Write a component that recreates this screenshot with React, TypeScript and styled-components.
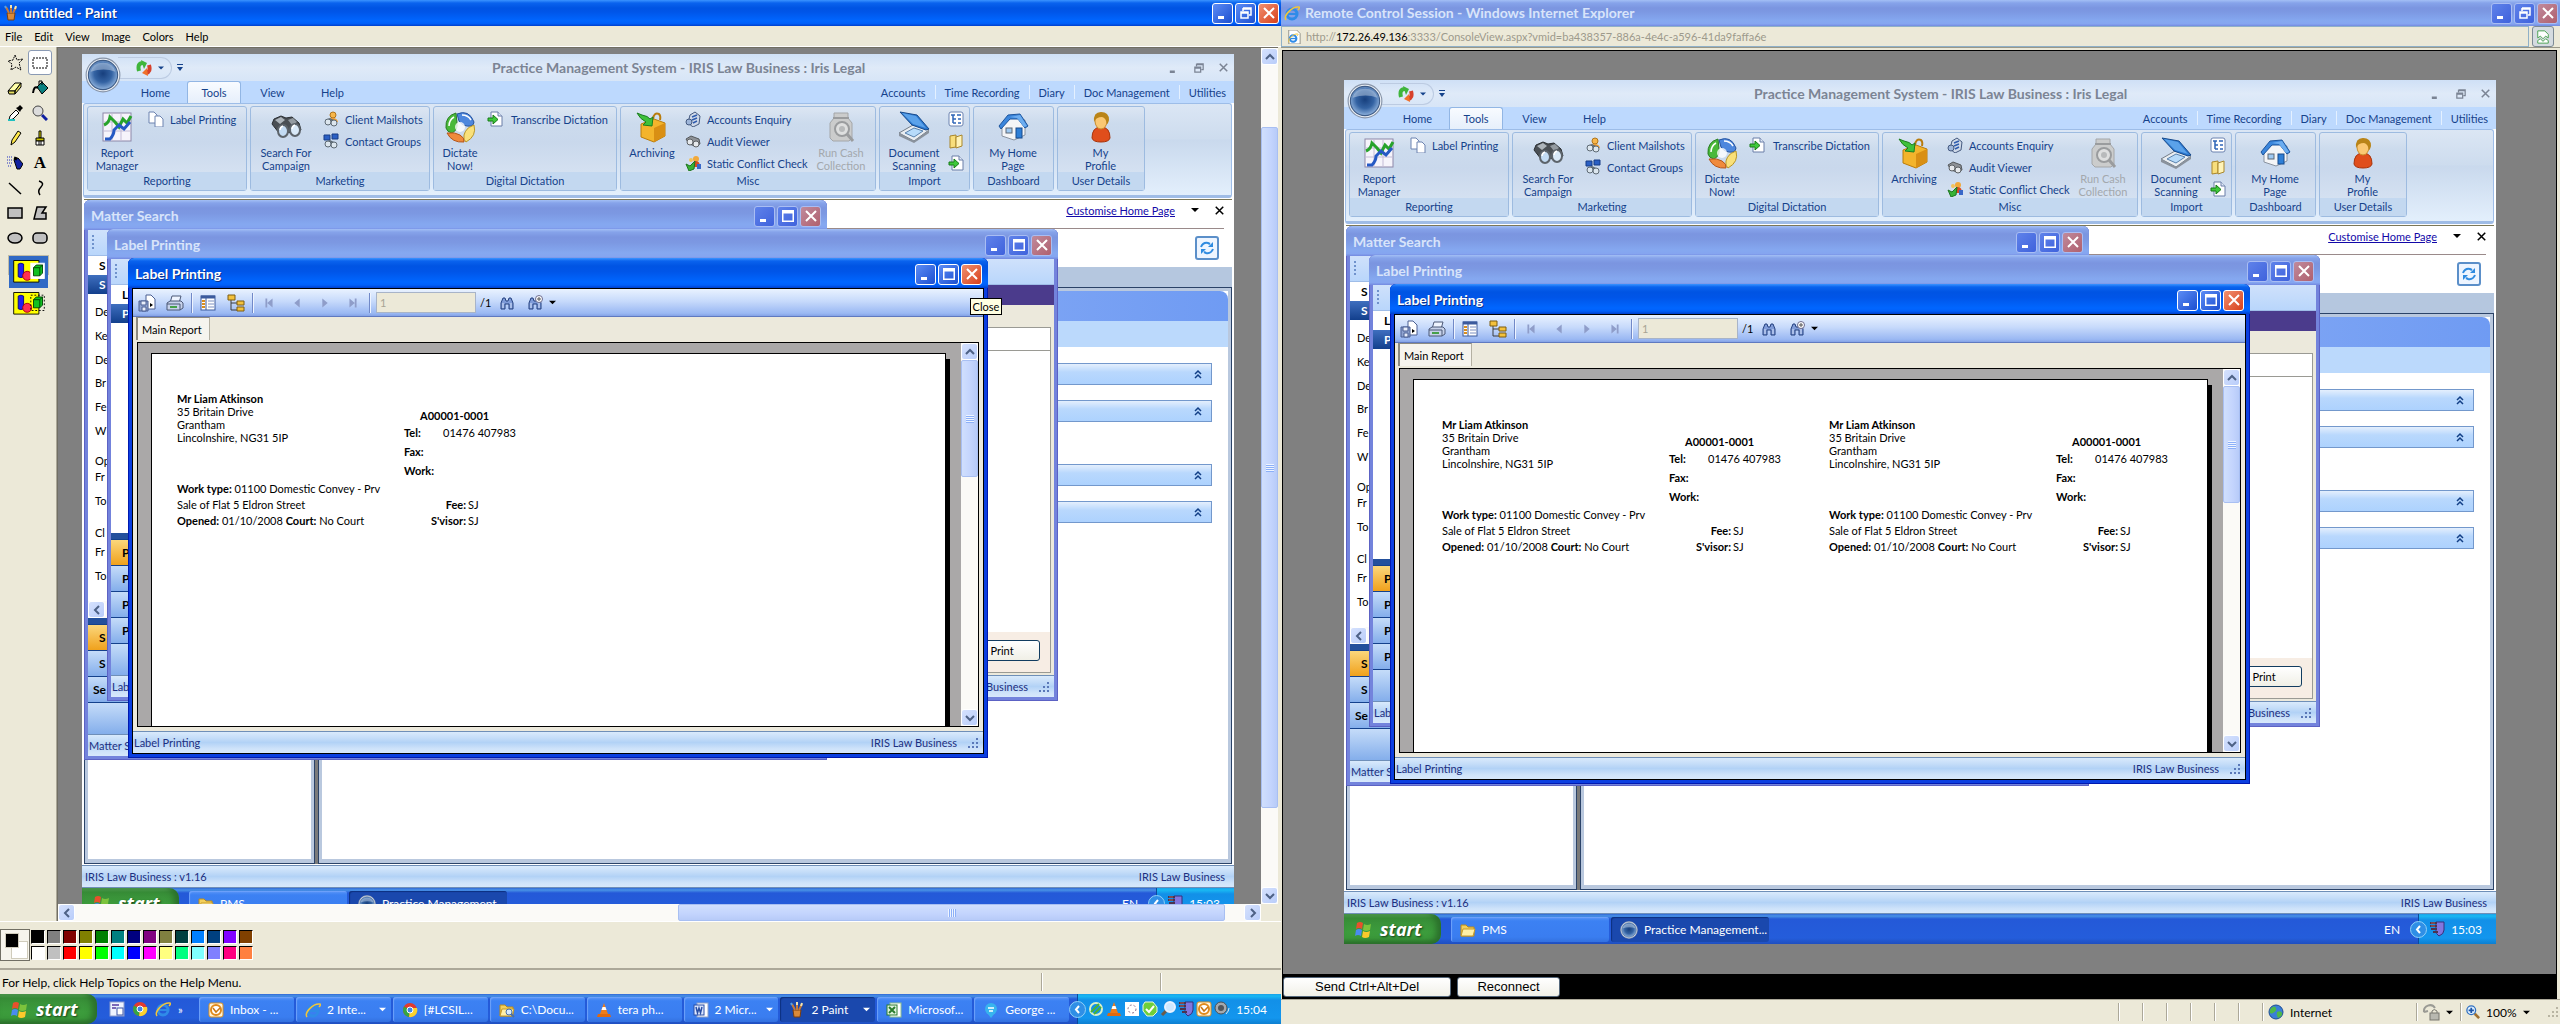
import React from "react";
import styled, { createGlobalStyle, css } from "styled-components";

const UI = `Lato, "DejaVu Sans Condensed", sans-serif`;

const Global = createGlobalStyle`
  * { box-sizing: border-box; }
  body { margin: 0; font: 11px/13px ${UI}; color: #000; background: #ece9d8; }
  button, input { font: inherit; color: inherit; margin: 0; }
  button { padding: 0; border: 0; background: none; }
  svg { display: block; flex: none; }
`;

/* ---------- icons ---------- */

type IconDef = { box: number; body: React.ReactNode };

const binoculars = (
  <g>
    <path d="M2 13l2-5 7-3 5 2 6-1 7 6 2 7-6 4-8-2-8 1z" fill="#4a4f54" stroke="#2b2f33" />
    <path d="M5 9l6-3 4 3-5 4z" fill="#aeb5bb" />
    <path d="M18 9l5-2 4 4-5 3z" fill="#949ba1" />
    <ellipse cx="13" cy="20" rx="5" ry="6" fill="#c3dbf3" stroke="#5d646b" strokeWidth="2" />
    <ellipse cx="25" cy="19" rx="5" ry="6" fill="#d9e9f8" stroke="#5d646b" strokeWidth="2" />
    <path d="M10 19q0-3 3-4M22 18q0-3 3-4" stroke="#fff" strokeWidth="1.500" fill="none" />
  </g>
);

const pageArrow = (
  <g>
    <path d="M4 1h7l4 4v10H4z" fill="#fff" stroke="#6b7fa8" />
    <path d="M11 1v4h4" fill="#dfe8f6" stroke="#6b7fa8" />
    <path d="M1 7h5V4l5 4.500-5 4.500v-3H1z" fill="#3fc93a" stroke="#167a18" />
  </g>
);

const finder = (
  <g>
    <path d="M2 14V8l2-5h2l1 3h2l1-3h2l2 5v6h-4V9H6v5z" fill="#7f9bd8" stroke="#24407f" />
    <path d="M4 8v5M12 8v5" stroke="#d7e2fa" />
  </g>
);

const cone = (
  <g>
    <path d="M8 1l4 11H4z" fill="#ef7d1a" />
    <path d="M6.500 5h3l1 3h-5z" fill="#fff" />
    <path d="M2 12h12l1 3H1z" fill="#e06a10" />
  </g>
);

const ieMark = (
  <g>
    <circle cx="8" cy="9" r="5" fill="none" stroke="#2f8be8" strokeWidth="3" />
    <path d="M4 9h9" stroke="#2f8be8" strokeWidth="2" />
    <path d="M2 15C-1 11 8 1 15 2c1 1 0 2-1 3" fill="none" stroke="#f2c53a" strokeWidth="1.500" />
  </g>
);

const folder = (
  <g>
    <path d="M1 3h5l2 2h6v9H1z" fill="#f3cf5b" stroke="#b88a1c" />
    <path d="M3 7h12l-2 7H1z" fill="#fff0a8" stroke="#c79a28" />
  </g>
);

const chromeMark = (
  <g>
    <circle cx="8" cy="8" r="7" fill="#e23b2e" />
    <path d="M8 8L2 4.500A7 7 0 0 0 7 15z" fill="#35a544" />
    <path d="M8 8l-1 7a7 7 0 0 0 8-9H9z" fill="#fbd22f" />
    <circle cx="8" cy="8" r="3" fill="#3f86e8" stroke="#fff" />
  </g>
);

const shield = (
  <g>
    <path d="M7 1h8v8q0 4-5 6-3-2-3-5z" fill="#8276de" stroke="#35307a" />
    <path d="M1 2h7M1 5h7M2 8h6M4 11h5" stroke="#4a3450" strokeWidth="2" />
    <path d="M2 2h4M2 5h4" stroke="#b06058" />
  </g>
);

const brushes = (
  <g>
    <path d="M4 8h8l-1 7H5z" fill="#d98a3a" stroke="#7a3e10" />
    <path d="M6 8L3 2M8 8V1M10 8l3-6" stroke="#c47a3c" strokeWidth="2" />
    <path d="M3 3L2 1" stroke="#58a0e0" strokeWidth="2" />
    <path d="M8 3V0M12 4l1-3" stroke="#f1e4b0" strokeWidth="2" />
  </g>
);

const outlook = (
  <g>
    <rect x="1" y="1" width="14" height="14" rx="2" fill="#fff3d6" stroke="#d98e1f" />
    <circle cx="8" cy="8" r="5" fill="#fff" stroke="#e08a1c" strokeWidth="2" />
    <path d="M5 6l3 4 4-4" fill="none" stroke="#c97612" strokeWidth="1.500" />
  </g>
);

const contactPair = (
  <g>
    <path d="M2 9l5-2 6 3-2 3z" fill="#5e6a74" />
    <circle cx="5" cy="11" r="3" fill="#dce6ee" stroke="#5e6a74" />
    <circle cx="11" cy="12" r="3" fill="#dce6ee" stroke="#5e6a74" />
  </g>
);

const tiles = (dashed: boolean) => (
  <g>
    <path d="M3 5h28v24H3z" fill="#ff0" stroke="#000" />
    <path d="M8 9q3-2 6 0v14q-3 2-6 0z" fill="#2020f0" stroke="#000080" />
    <circle cx="18" cy="22" r="5" fill="#ff3050" stroke="#a00" />
    <rect
      x="22"
      y="8"
      width="15"
      height="17"
      fill={dashed ? "none" : "#fff"}
      stroke={dashed ? "#000" : "#fff"}
      strokeDasharray={dashed ? "2 2" : undefined}
    />
    <path d="M25 13l3-3h7v9l-3 3h-7z" fill="#10c020" stroke="#004000" />
    <path d="M25 13h7v9M32 13l3-3" fill="none" stroke="#004000" />
  </g>
);

const ICONS: Record<string, IconDef> = {
  chart: {
    box: 32,
    body: (
      <g>
        <rect x="2" y="2" width="28" height="28" fill="#f6f4fb" stroke="#8d87a8" />
        <path d="M2 11h28M2 20h28M11 2v28M20 2v28" stroke="#c3bcd6" />
        <path d="M3 14q5-2 6-8l5 5 4 5 4-8 4 4 4-7" fill="none" stroke="#27a32b" strokeWidth="3" />
        <path d="M4 28h5q4-4 4-9l5-5 5 4 6-7" fill="none" stroke="#2559c4" strokeWidth="3" />
      </g>
    ),
  },
  binoculars: { box: 32, body: binoculars },
  swirl: {
    box: 32,
    body: (
      <g>
        <path d="M12 2q-11 3-10 15 1 4 6 5 6-3 5-10z" fill="#49b83a" stroke="#2b7e24" />
        <path d="M13 3q12-5 17 8 0 3-3 4-8 1-12-5z" fill="#4d87dd" stroke="#27549f" />
        <path d="M30 14q3 11-8 17-3-2-2-7 2-7 8-9z" fill="#f9e07a" stroke="#b99526" />
        <path d="M3 22q5 10 17 9 1-4-4-7-6-3-10-2z" fill="#f08a3c" stroke="#b4561b" />
        <circle cx="16" cy="16" r="5" fill="#fff" fillOpacity=".8" />
        <path d="M5 15q0-6 5-9M18 4q6 0 9 5" fill="none" stroke="#fff" strokeWidth="1.500" />
      </g>
    ),
  },
  archive: {
    box: 32,
    body: (
      <g>
        <path d="M5 13l13-5 11 4v13l-11 6-13-5z" fill="#f3b42c" stroke="#b97c0d" />
        <path d="M18 17l11-5v13l-11 6z" fill="#d98f14" />
        <path d="M17 8q1-7 6-5 2 2 1 6" fill="none" stroke="#b97c0d" strokeWidth="2" />
        <path d="M1 2l5 2q6 1 8 4l3-2-1 9-9-1 3-3Q4 8 1 2z" fill="#3fc13a" stroke="#1d7d20" />
      </g>
    ),
  },
  jar: {
    box: 32,
    body: (
      <g>
        <path d="M9 2h14v5l4 5v15l-3 3H8l-3-3V12l4-5z" fill="#cbcccc" stroke="#a4a6a8" />
        <path d="M8 7h16" stroke="#9a9c9e" strokeWidth="2" />
        <circle cx="17" cy="18" r="7" fill="#dedfdf" stroke="#9a9c9e" strokeWidth="2" />
        <circle cx="17" cy="18" r="3" fill="#b8babb" />
        <path d="M22 23l6 7" stroke="#9a9c9e" strokeWidth="3" />
      </g>
    ),
  },
  scanner: {
    box: 32,
    body: (
      <g>
        <path d="M1 22l14-8 16 5-15 11z" fill="#e9edf1" stroke="#747d88" />
        <path d="M7 22l9-5 9 3-9 6z" fill="#b7dbfa" stroke="#5a82ad" />
        <path d="M2 1l17 3 12 14-3 1-14-5z" fill="#2b78cf" stroke="#174a8c" />
        <path d="M4 2l14 3 10 12-13-4z" fill="#5ba2ea" />
        <path d="M1 22v3l15 7 15-10v-3L16 30z" fill="#8a929c" />
      </g>
    ),
  },
  house: {
    box: 32,
    body: (
      <g>
        <path d="M5 15l9-9 14 3v15l-11 5-12-4z" fill="#f4f5f7" stroke="#8a93a0" />
        <path d="M2 15L11 4l12-1 8 12-3 2-7-9-8 0-9 10z" fill="#3b86dc" stroke="#1c549c" />
        <path d="M13 6l10-2 7 11-3 1-7-9z" fill="#6cadf0" />
        <rect x="19" y="17" width="6" height="10" fill="#2f7fd6" stroke="#174a8c" />
        <rect x="9" y="17" width="6" height="5" fill="#9ec9f2" stroke="#5c6672" />
      </g>
    ),
  },
  person: {
    box: 32,
    body: (
      <g>
        <path d="M7 27q0-11 9-11t9 11q-1 4-9 4t-9-4z" fill="#e04e1c" stroke="#a83208" />
        <ellipse cx="16" cy="10" rx="6" ry="8" fill="#fbc873" stroke="#c98d2c" />
        <path d="M9 11Q8 1 16 1t8 8q-1 4-2 4-1-6-5-7-6 0-8 5z" fill="#b98418" />
      </g>
    ),
  },
  pages: {
    box: 16,
    body: (
      <g fill="#fff" stroke="#6d83b0">
        <path d="M1 1h5l3 3v8H1z" />
        <path d="M7 5h5l3 3v8H7z" />
      </g>
    ),
  },
  client: {
    box: 16,
    body: (
      <g>
        <circle cx="10" cy="4" r="3" fill="#f7b64a" stroke="#b0741a" />
        <path d="M5 11q1-4 5-4t5 4z" fill="#f09b2a" />
        {contactPair}
      </g>
    ),
  },
  contact: {
    box: 16,
    body: (
      <g>
        <path d="M1 2h6v5H1zM9 1h6v5H9z" fill="#2a5fc4" stroke="#173c86" />
        {contactPair}
      </g>
    ),
  },
  pageArrow: { box: 16, body: pageArrow },
  enquiry: {
    box: 16,
    body: (
      <g>
        <path d="M5 4l5-3 5 4-1 8-6 3-5-4z" fill="#cfd9e8" stroke="#44597f" />
        <path d="M7 6l5-2M7 9l5-2M8 12l4-2" stroke="#2f5cae" strokeWidth="1.500" />
        <circle cx="4" cy="11" r="3" fill="#9eb6da" stroke="#44597f" />
      </g>
    ),
  },
  audit: {
    box: 16,
    body: (
      <g>
        <path d="M1 6l5-3 8 3 1 5-5 2-6-2z" fill="#8e9297" stroke="#55595d" />
        <circle cx="5" cy="9" r="3" fill="#e6e9ec" stroke="#5d6165" />
        <circle cx="11" cy="11" r="3" fill="#e6e9ec" stroke="#5d6165" />
      </g>
    ),
  },
  conflict: {
    box: 16,
    body: (
      <g>
        <circle cx="6" cy="5" r="2" fill="#f2c35b" />
        <circle cx="11" cy="4" r="3" fill="#f2a93b" />
        <path d="M7 12q0-6 4-6t4 6z" fill="#d94a22" />
        <rect x="12" y="9" width="4" height="5" fill="#3a68c8" />
        <path d="M1 9l4 2 5-5-1 8-5 2z" fill="#39b235" stroke="#1c7620" />
      </g>
    ),
  },
  list: {
    box: 16,
    body: (
      <g>
        <rect x="1" y="1" width="14" height="14" rx="2" fill="#fff" stroke="#6d83b0" />
        <path d="M3 4h4M5 4v8M5 8h3M5 12h3M9 4h4M10 8h3M10 12h3" stroke="#2f66b8" fill="none" strokeWidth="1.500" />
      </g>
    ),
  },
  foldout: {
    box: 16,
    body: (
      <g>
        <path d="M2 3l6-1v12l-6 1z" fill="#f8de7c" stroke="#a9862a" />
        <path d="M8 4l6-2v11l-6 2z" fill="#fff3b8" stroke="#a9862a" />
      </g>
    ),
  },
  recycle: {
    box: 16,
    body: (
      <g fill="none" strokeWidth="4">
        <path d="M3 11Q1 3 7 3" stroke="#3fb53b" />
        <path d="M5 0l6 3-3 6z" fill="#3fb53b" stroke="none" />
        <path d="M13 5q2 7-3 8" stroke="#d7402a" />
        <path d="M11 8l-5 5 6 3z" fill="#f0702a" stroke="none" />
      </g>
    ),
  },
  refresh: {
    box: 16,
    body: (
      <g fill="none" stroke="#2f8be0" strokeWidth="2">
        <path d="M2 7q2-5 7-4l2 1" />
        <path d="M14 2v5H9z" fill="#2f8be0" stroke="none" />
        <path d="M14 9q-2 5-7 4l-2-1" />
        <path d="M2 14V9h5z" fill="#2f8be0" stroke="none" />
      </g>
    ),
  },
  orb: {
    box: 32,
    body: (
      <g>
        <defs>
          <radialGradient id="orbFill" cx="50%" cy="45%" r="60%">
            <stop offset="0" stopColor="#173f7d" />
            <stop offset=".5" stopColor="#3463a3" />
            <stop offset="1" stopColor="#a3c4ea" />
          </radialGradient>
        </defs>
        <circle cx="16" cy="16" r="15" fill="#eef2f7" stroke="#8794a8" />
        <circle cx="16" cy="16" r="13" fill="url(#orbFill)" stroke="#3d5c88" />
        <path d="M5 13Q7 5 16 5t11 8q-10-4-22 0z" fill="#cfdcec" fillOpacity=".45" />
      </g>
    ),
  },
  exportFile: {
    box: 18,
    body: (
      <g stroke="#4a5f92">
        <path d="M8 1h5l4 4v10H8z" fill="#fff" />
        <path d="M1 7h9v10H1z" fill="#8fa3d0" />
        <path d="M3 7h5v4H3zM4 13h4v4H4z" fill="#e8eefb" />
        <path d="M12 9l3 2-3 2z" fill="#000" stroke="none" />
      </g>
    ),
  },
  printer: {
    box: 18,
    body: (
      <g stroke="#4b5877">
        <path d="M6 2h9l-2 7H4z" fill="#eef4ff" />
        <path d="M1 9l3-2h11l2 2v5l-3 2H1z" fill="#c7d2ea" />
        <path d="M1 10h13v6" fill="none" />
        <path d="M4 13h7" stroke="#46a04a" strokeWidth="2" />
      </g>
    ),
  },
  panel: {
    box: 18,
    body: (
      <g>
        <rect x="2" y="2" width="14" height="14" fill="#fff" stroke="#3b5a9d" />
        <path d="M2 3h14" stroke="#3b5a9d" strokeWidth="3" />
        <path d="M3 7h3M3 10h3M3 13h3" stroke="#d98e1f" strokeWidth="2" />
        <path d="M9 7h6M9 10h6M9 13h6" stroke="#7a8fc0" />
        <path d="M7 4v12" stroke="#3b5a9d" />
      </g>
    ),
  },
  tree: {
    box: 18,
    body: (
      <g>
        <path d="M4 6v10h7M4 9h7" fill="none" stroke="#3c3c3c" />
        <path d="M1 1h7v5H1zM10 7h7v4h-7zM10 13h7v4h-7z" fill="#f3c13c" stroke="#7d5d10" />
      </g>
    ),
  },
  first: { box: 18, body: <path d="M5 4h2v10H5zM13 4v10L7 9z" fill="#8f9dc9" /> },
  prev: { box: 18, body: <path d="M12 4v10L6 9z" fill="#8f9dc9" /> },
  next: { box: 18, body: <path d="M6 4v10l6-5z" fill="#8f9dc9" /> },
  last: { box: 18, body: <path d="M5 4v10l6-5zM11 4h2v10h-2z" fill="#8f9dc9" /> },
  find: { box: 16, body: finder },
  findPlus: {
    box: 16,
    body: (
      <g>
        {finder}
        <circle cx="12" cy="4" r="3.500" fill="#fff" stroke="#6b6b8c" />
        <path d="M10 4h4M12 2v4" stroke="#555" />
      </g>
    ),
  },
  flag: {
    box: 20,
    body: (
      <g>
        <path d="M3 4q3-2 6 0L8 10q-3-2-6 0z" fill="#e8502c" />
        <path d="M10 5q3 2 7 0l-1 6q-4 2-7 0z" fill="#7cc33c" />
        <path d="M2 11q3-2 6 0l-1 6q-3-2-6 0z" fill="#4a8bf0" />
        <path d="M9 12q3 2 7 0l-1 6q-4 2-7 0z" fill="#fbc92c" />
      </g>
    ),
  },
  brushes: { box: 16, body: brushes },
  ie: { box: 16, body: ieMark },
  iePage: {
    box: 16,
    body: (
      <g>
        <path d="M2 0h9l4 4v12H2z" fill="#fff" stroke="#8a8a80" />
        <g transform="translate(1 3) scale(.75)">{ieMark}</g>
      </g>
    ),
  },
  compat: {
    box: 16,
    body: (
      <g fill="#fff" stroke="#3c9a42">
        <path d="M2 1h8l4 4v4l-3-2-3 3-3-3-3 2z" />
        <path d="M2 15v-3l3-2 3 3 3-3 3 2v3z" />
      </g>
    ),
  },
  desktop: {
    box: 16,
    body: (
      <g>
        <rect x="1" y="1" width="14" height="14" fill="#eef3ff" stroke="#8c9ccc" />
        <path d="M3 4h7M3 7h4" stroke="#7a68b8" strokeWidth="2" />
        <rect x="8" y="7" width="6" height="7" fill="#fff" stroke="#3d57a8" />
      </g>
    ),
  },
  chrome: { box: 16, body: chromeMark },
  outlook: { box: 16, body: outlook },
  folder: { box: 16, body: folder },
  folderFind: {
    box: 16,
    body: (
      <g>
        {folder}
        <circle cx="10" cy="10" r="3" fill="#d6ecff" stroke="#4a6fa8" />
        <path d="M12 12l3 3" stroke="#4a6fa8" strokeWidth="2" />
      </g>
    ),
  },
  cone: { box: 16, body: cone },
  word: {
    box: 16,
    body: (
      <g>
        <rect x="4" y="1" width="11" height="14" fill="#fff" stroke="#8ea0c8" />
        <rect x="1" y="3" width="10" height="10" fill="#dce7ff" stroke="#2a4fa5" />
        <path d="M3 5l1.500 6L6 6l1.500 5L9 5" fill="none" stroke="#2a4fa5" strokeWidth="1.500" />
      </g>
    ),
  },
  excel: {
    box: 16,
    body: (
      <g>
        <rect x="4" y="1" width="11" height="14" fill="#fff" stroke="#8fc08f" />
        <rect x="1" y="3" width="10" height="10" fill="#e2f4e0" stroke="#2b7d2e" />
        <path d="M3 5l6 6M9 5l-6 6" stroke="#2b7d2e" strokeWidth="2" />
      </g>
    ),
  },
  talk: {
    box: 16,
    body: (
      <g>
        <circle cx="8" cy="7" r="6" fill="#38b4ee" />
        <path d="M5 12h6l-3 4z" fill="#38b4ee" />
        <path d="M5 6h6M6 9h4" stroke="#fff" strokeWidth="1.500" />
      </g>
    ),
  },
  orbGreen: {
    box: 16,
    body: (
      <g fill="none">
        <circle cx="8" cy="8" r="6" stroke="#d9f0c8" strokeWidth="2" />
        <path d="M3 11L11 3M6 13l7-7" stroke="#49b235" strokeWidth="2" />
      </g>
    ),
  },
  spinner: {
    box: 16,
    body: (
      <g>
        <rect x="1" y="1" width="14" height="14" fill="#fff" />
        <circle cx="8" cy="8" r="4" fill="none" stroke="#8b6f8b" strokeDasharray="2 2" />
      </g>
    ),
  },
  tick: {
    box: 16,
    body: (
      <g>
        <path d="M3 1h8l4 5v5l-4 4H5l-4-5V4z" fill="#6fcf3a" stroke="#e9f7df" />
        <path d="M4 8l3 3 5-6" fill="none" stroke="#fff" strokeWidth="2" />
      </g>
    ),
  },
  lens: {
    box: 16,
    body: (
      <g>
        <path d="M2 14l5-5" stroke="#6d5a48" strokeWidth="3" />
        <circle cx="10" cy="6" r="5" fill="#cfe8ff" stroke="#e9f2ff" strokeWidth="2" />
      </g>
    ),
  },
  shield: { box: 16, body: shield },
  speaker: {
    box: 16,
    body: (
      <g>
        <circle cx="7" cy="7" r="6" fill="#a4a9ae" stroke="#4b5054" />
        <circle cx="7" cy="7" r="3" fill="#4f545a" />
        <path d="M12 13q3-3 3-6" fill="none" stroke="#e0e6ec" />
      </g>
    ),
  },
  globe: {
    box: 16,
    body: (
      <g>
        <circle cx="8" cy="8" r="7" fill="#3a7fd8" stroke="#1d4c94" />
        <path d="M3 4q4-3 5 0t-3 5-3-3zM9 8q4-2 5 1t-4 5q-2-3-1-6z" fill="#4eb84a" />
      </g>
    ),
  },
  lock: {
    box: 18,
    body: (
      <g>
        <path d="M2 9a6 6 0 0 1 11-4M2 9l4-1" fill="none" stroke="#9a9a94" strokeWidth="2" />
        <rect x="8" y="10" width="9" height="7" fill="#b8b8b0" stroke="#77776f" />
        <path d="M10 10V8q2-3 5 0v2" fill="none" stroke="#77776f" />
      </g>
    ),
  },
  zoomIn: {
    box: 16,
    body: (
      <g>
        <path d="M10 10l5 5" stroke="#a07030" strokeWidth="3" />
        <circle cx="6" cy="6" r="5" fill="#dff0ff" stroke="#2f6fc0" strokeWidth="1.500" />
        <path d="M3 6h6M6 3v6" stroke="#1d55a8" strokeWidth="2" />
      </g>
    ),
  },
  freeSelect: {
    box: 16,
    body: <path d="M8 0l2 5 6-1-4 4 2 7-5-3-5 3 1-6-4-3 5-1z" fill="none" stroke="#000" strokeDasharray="2 1" />,
  },
  rectSelect: {
    box: 16,
    body: <rect x="1" y="3" width="14" height="10" fill="none" stroke="#000" strokeDasharray="2 1" />,
  },
  eraser: {
    box: 16,
    body: (
      <g stroke="#000">
        <path d="M1 11l7-8h6l-6 8z" fill="#ffffa8" />
        <path d="M1 11h7v3H2zM8 11l6-8v4l-6 7z" fill="#e8e060" />
      </g>
    ),
  },
  fill: {
    box: 16,
    body: (
      <g stroke="#000">
        <path d="M5 7l5-5 6 6-6 6z" fill="#0a8080" />
        <path d="M6 8q-4-3-5 5" fill="none" strokeWidth="2" />
        <path d="M7 5V1h3v4" fill="none" />
      </g>
    ),
  },
  dropper: {
    box: 16,
    body: (
      <g>
        <path d="M2 15l1-4 6-6 3 3-6 6z" fill="#fff" stroke="#000" />
        <path d="M9 3l2-1 2-2 3 3-2 2-1 2z" fill="#000" />
        <path d="M1 15h7" stroke="#20c0c0" strokeWidth="2" />
      </g>
    ),
  },
  magnifier: {
    box: 16,
    body: (
      <g>
        <circle cx="6" cy="6" r="5" fill="#dcdcdc" stroke="#444" />
        <path d="M10 10l5 5" stroke="#1020a0" strokeWidth="3" />
      </g>
    ),
  },
  pencil: {
    box: 16,
    body: <path d="M4 15l1-5 6-9 3 2-6 9z" fill="#ffe84a" stroke="#000" />,
  },
  brush: {
    box: 16,
    body: (
      <g stroke="#000">
        <path d="M7 1h2v7H7z" fill="#e8e000" />
        <path d="M4 8h8v3H4z" fill="#c8c000" />
        <path d="M4 11h8v4H4z" fill="#fff" />
        <path d="M7 11v4M9 11v4" />
      </g>
    ),
  },
  spray: {
    box: 16,
    body: (
      <g>
        <path d="M7 5l4-2 5 6-3 5-3 0z" fill="#1020a0" stroke="#000" />
        <path d="M7 3l3 1" stroke="#000" strokeWidth="3" />
        <path d="M0 2h6M0 5h6M0 8h5M1 11h3" stroke="#2030c0" strokeDasharray="1 1" />
      </g>
    ),
  },
  line: { box: 16, body: <path d="M2 3l12 11" stroke="#000" strokeWidth="1.500" /> },
  curve: { box: 16, body: <path d="M7 1q6 2 2 6t-1 8" fill="none" stroke="#000" strokeWidth="1.500" /> },
  rect: { box: 16, body: <rect x="1" y="3" width="14" height="10" fill="#c0c0c0" stroke="#000" strokeWidth="1.500" /> },
  poly: { box: 16, body: <path d="M5 2h9l-4 6h4v6H2z" fill="#c0c0c0" stroke="#000" strokeWidth="1.500" /> },
  ellipse: { box: 16, body: <ellipse cx="8" cy="8" rx="7" ry="5" fill="#c0c0c0" stroke="#000" strokeWidth="1.500" /> },
  roundRect: {
    box: 16,
    body: <rect x="1" y="3" width="14" height="10" rx="4" fill="#c0c0c0" stroke="#000" strokeWidth="1.500" />,
  },
  tilesOpaque: { box: 40, body: tiles(false) },
  tilesClear: { box: 40, body: tiles(true) },
  chevronUp: { box: 10, body: <path d="M1 7l4-4 4 4" fill="none" stroke="#4d6185" strokeWidth="2" /> },
  chevronDown: { box: 10, body: <path d="M1 3l4 4 4-4" fill="none" stroke="#4d6185" strokeWidth="2" /> },
  chevronLeft: { box: 10, body: <path d="M7 1L3 5l4 4" fill="none" stroke="#4d6185" strokeWidth="2" /> },
  chevronRight: { box: 10, body: <path d="M3 1l4 4-4 4" fill="none" stroke="#4d6185" strokeWidth="2" /> },
  expander: {
    box: 10,
    body: <path d="M2 5l3-3 3 3M2 9l3-3 3 3" fill="none" stroke="#123f86" strokeWidth="1.500" />,
  },
  minimize: { box: 12, body: <path d="M1 9h6v3H1z" fill="currentColor" /> },
  maximize: {
    box: 12,
    body: <path d="M0 0h12v12H0zM1.500 3.500v7h9v-7z" fill="currentColor" fillRule="evenodd" />,
  },
  restore: {
    box: 12,
    body: (
      <path d="M3 1h8v7H9M3 1v3M3 2h8M1 5h7v6H1zM1 6h7" fill="none" stroke="currentColor" strokeWidth="1.500" />
    ),
  },
  cross: { box: 12, body: <path d="M1 1l10 10M11 1L1 11" stroke="currentColor" strokeWidth="2" /> },
  caret: { box: 8, body: <path d="M0 2h8L4 6z" fill="currentColor" /> },
  overflow: { box: 8, body: <path d="M1 0h6v1H1zM1 3h6L4 7z" fill="currentColor" /> },
};

const Icon = ({ name, size }: { name: string; size?: number }) => {
  const d = ICONS[name];
  const s = size ?? d.box;
  return (
    <svg width={s} height={s} viewBox={`0 0 ${d.box} ${d.box}`} aria-hidden="true">
      {d.body}
    </svg>
  );
};

/* ---------- window chrome ---------- */

const activeBar = "linear-gradient(#3b94ff 0, #0a63ee 3px, #0054e3 8px, #0055e8 45%, #0066ff 80%, #0060fa 90%, #0040cc)";
const dimBar = "linear-gradient(#a3bff5 0, #86a3ea 3px, #7b95e0 8px, #7c98e2 45%, #85a8f0 80%, #85a5f0 92%, #7389e0)";
const statusBlue = "linear-gradient(#d9eafc, #c3dcf8 30%, #b2d2f6 50%, #cfe3fa 80%, #d7e8fc)";

const TitleBar = styled.header<{ $dim?: boolean; $inner?: boolean }>`
  display: flex;
  align-items: center;
  gap: 5px;
  flex: none;
  height: ${(p) => (p.$inner ? 30 : 26)}px;
  padding: ${(p) => (p.$inner ? "2px 6px 0 7px" : "0 2px 0 3px")};
  background: ${(p) => (p.$dim ? dimBar : activeBar)};
  color: ${(p) => (p.$dim ? "#d8e4fa" : "#fff")};
  text-shadow: ${(p) => (p.$dim ? "none" : "1px 1px #0a318c")};
  font-size: 14px;
  line-height: 18px;
  font-weight: 700;
  border-radius: ${(p) => (p.$inner ? "6px 6px 0 0" : "0")};
  white-space: nowrap;
`;

const TitleText = styled.span`
  flex: 1;
`;

const Caption = styled.button<{ $dim?: boolean; $close?: boolean }>`
  display: grid;
  place-items: center;
  width: 21px;
  height: 21px;
  border: 1px solid ${(p) => (p.$dim ? "#a9bdf3" : "#fff")};
  border-radius: 3px;
  color: #fff;
  background: ${(p) =>
    p.$close
      ? p.$dim
        ? "linear-gradient(135deg, #c08a9c, #b0606e)"
        : "linear-gradient(135deg, #f09070, #d8401c)"
      : p.$dim
        ? "linear-gradient(135deg, #5f82ea, #3f62dc)"
        : "linear-gradient(135deg, #5c8cf5, #1c4fd0)"};
`;

const Captions = styled.div`
  display: flex;
  gap: 2px;
`;

const CaptionButtons = ({ dim, restored }: { dim?: boolean; restored?: boolean }) => (
  <Captions>
    <Caption $dim={dim} aria-label="Minimize">
      <Icon name="minimize" />
    </Caption>
    <Caption $dim={dim} aria-label={restored ? "Restore" : "Maximize"}>
      <Icon name={restored ? "restore" : "maximize"} />
    </Caption>
    <Caption $dim={dim} $close aria-label="Close window">
      <Icon name="cross" />
    </Caption>
  </Captions>
);

/* ---------- scroll bars ---------- */

const Track = styled.div<{ $across?: boolean }>`
  display: flex;
  flex-direction: ${(p) => (p.$across ? "row" : "column")};
  flex: none;
  ${(p) => (p.$across ? "height: 17px;" : "width: 17px;")}
  background: #fbfaf7;
`;

const ScrollButton = styled.button`
  display: grid;
  place-items: center;
  flex: none;
  width: 17px;
  height: 17px;
  border: 1px solid #fff;
  border-radius: 3px;
  background: linear-gradient(135deg, #d5e1fd, #b9cdfa);
`;

const Gap = styled.div<{ $grow: number }>`
  flex: ${(p) => p.$grow} 0 0;
`;

const Thumb = styled.div<{ $grow: number; $across?: boolean }>`
  flex: ${(p) => p.$grow} 0 0;
  display: grid;
  place-items: center;
  border: 1px solid #a8bff2;
  border-radius: 2px;
  background: linear-gradient(${(p) => (p.$across ? "180deg" : "90deg")}, #d0dffd, #c3d4fd 60%, #b7cbf8);
  &::after {
    content: "";
    width: 8px;
    height: 8px;
    background: repeating-linear-gradient(${(p) => (p.$across ? "90deg" : "180deg")}, #eef4ff 0 1px, #8cb0f8 1px 2px);
  }
`;

/* ---------- XP task bar ---------- */

const TaskBarRoot = styled.nav`
  display: flex;
  flex: none;
  height: 30px;
  color: #fff;
  white-space: nowrap;
  background: linear-gradient(#3168d5 0, #4993e6 2px, #2459d8 5px, #245ddb 24px, #1f4fc0);
`;

const Start = styled.button`
  display: flex;
  align-items: center;
  gap: 6px;
  width: 97px;
  padding-left: 10px;
  border-radius: 0 10px 10px 0;
  background: linear-gradient(#5fae5f 0, #388e38 4px, #3c9c3c 60%, #3a983a 80%, #2c702c);
  box-shadow: inset -5px 0 6px #2b6f2b;
  font: italic 700 18px/20px "Open Sans", sans-serif;
  text-shadow: 1px 1px 2px #173f17;
`;

const QuickLaunch = styled.div`
  display: flex;
  align-items: center;
  gap: 7px;
  width: 102px;
  padding-left: 12px;
`;

const Tasks = styled.div<{ $lead?: boolean }>`
  display: flex;
  flex: 1;
  gap: 2px;
  padding: 3px 8px 2px ${(p) => (p.$lead ? 10 : 0)}px;
`;

const Task = styled.button<{ $on?: boolean; $wide?: boolean }>`
  display: flex;
  align-items: center;
  gap: 6px;
  ${(p) => (p.$wide ? "width: 158px;" : "flex: 1 1 0;")}
  min-width: 0;
  padding: 0 5px 0 9px;
  border-radius: 3px;
  font-size: 12px;
  text-align: left;
  background: ${(p) => (p.$on ? "#1a48ad" : "linear-gradient(#5a95f8, #3c81f3 4px, #3a7df0 80%, #3371df)")};
  box-shadow: inset 1px 1px 1px ${(p) => (p.$on ? "#0d3080" : "#6fa2fa")};
  span {
    flex: 1;
  }
`;

const Tray = styled.div`
  display: flex;
  align-items: center;
  gap: 2px;
  flex: none;
  padding-right: 14px;
  border-left: 1px solid #0b4b9c;
  background: linear-gradient(#1a9fe8 0, #19b9f3 2px, #1290e8 6px, #1396ee 80%, #0d7fd0);
`;

const Expand = styled.button`
  display: grid;
  place-items: center;
  width: 17px;
  height: 17px;
  margin-left: -9px;
  border-radius: 50%;
  border: 1px solid #8fd0f8;
  background: #2f8fe6;
  color: #fff;
`;

const Clock = styled.span`
  margin-left: 4px;
  font-size: 12px;
`;

const Lang = styled.span`
  align-self: center;
  margin-right: 18px;
  font-size: 12px;
`;

const StartButton = () => (
  <Start>
    <Icon name="flag" />
    start
  </Start>
);

const TrayExpand = () => (
  <Expand aria-label="Show hidden icons">
    <svg width="7" height="9" viewBox="0 0 7 9" aria-hidden="true">
      <path d="M5 1L2 4.500 5 8" fill="none" stroke="#fff" strokeWidth="2" />
    </svg>
  </Expand>
);

/* ---------- ribbon ---------- */

const RibbonTitle = styled.div`
  display: flex;
  align-items: center;
  flex: none;
  height: 27px;
  padding: 0 6px 0 36px;
  background: linear-gradient(#cfe0f6, #dfeaf8 50%, #d7e5f7);
  color: #7b8494;
`;

const QuickBar = styled.div`
  display: flex;
  align-items: center;
  gap: 6px;
  width: 54px;
  height: 22px;
  padding-left: 18px;
  border: 1px solid #bccbe2;
  border-left: 0;
  border-radius: 0 11px 11px 0;
  color: #15428b;
`;

const QuickMore = styled.span`
  width: 320px;
  padding-left: 4px;
  color: #15428b;
`;

const RibbonName = styled.h1`
  flex: 1;
  margin: 0;
  font-size: 14px;
  line-height: 16px;
  font-weight: 700;
  white-space: nowrap;
`;

const RibbonCaptions = styled.div`
  display: flex;
  align-items: center;
  gap: 15px;
  button {
    display: grid;
  }
`;

const Orb = styled.button`
  position: absolute;
  left: 3px;
  top: 3px;
  z-index: 1;
`;

const TabStrip = styled.div`
  display: flex;
  flex: none;
  height: 22px;
  padding: 0 7px 0 45px;
  background: #bdd9fe;
  color: #15428b;
`;

const Tab = styled.button<{ $on?: boolean }>`
  width: ${(p) => (p.$on ? 54 : 57)}px;
  margin-right: 3px;
  border-radius: 3px 3px 0 0;
  ${(p) =>
    p.$on &&
    css`
      background: linear-gradient(#f8fbff, #e6effb);
      border: 1px solid #92b6e4;
      border-bottom: 0;
    `}
`;

const Areas = styled.div`
  display: flex;
  align-items: center;
  margin-left: auto;
  button {
    height: 14px;
    padding: 0 9px;
  }
  button + button {
    border-left: 1px solid #e4f0ff;
  }
  button:last-child {
    padding-right: 1px;
  }
`;

const Ribbon = styled.div`
  display: flex;
  gap: 3px;
  flex: none;
  height: 95px;
  margin: 0 2px 0 1px;
  padding: 2px 3px 4px;
  border: 1px solid #9dbde8;
  border-bottom: 3px solid #9fbce6;
  border-radius: 3px;
  background: linear-gradient(#dbe6f4 0, #cddcee 35px, #c9d9ed 36px, #e3effc);
  color: #15428b;
`;

const GroupBox = styled.section<{ $w: number }>`
  display: flex;
  flex-direction: column;
  width: ${(p) => p.$w}px;
  border: 1px solid #9dbbe0;
  border-radius: 3px;
  background: linear-gradient(#dce6f3 0, #ccdbed 16px, #c9d8ec 35px, #dbe6f4);
`;

const GroupBody = styled.div`
  display: flex;
  flex: 1;
  padding: 4px 2px 0 4px;
`;

const GroupName = styled.h2`
  margin: 0;
  height: 18px;
  font-size: 11px;
  line-height: 17px;
  font-weight: 400;
  text-align: center;
  background: #c3d8f0;
`;

const Big = styled.button<{ $w: number }>`
  display: flex;
  flex-direction: column;
  align-items: center;
  gap: 3px;
  flex: none;
  width: ${(p) => p.$w}px;
  line-height: 13px;
  &:disabled {
    color: #a3a8ad;
  }
`;

const SmallCol = styled.div<{ $lead: number }>`
  display: flex;
  flex-direction: column;
  gap: 6px;
  flex: 1;
  padding-left: ${(p) => p.$lead}px;
`;

const Small = styled.button<{ $gap?: number }>`
  display: flex;
  align-items: center;
  gap: ${(p) => p.$gap ?? 6}px;
  height: 16px;
  white-space: nowrap;
`;

type SmallItem = { icon: string; label?: string; aria?: string };
type GroupDef = {
  name: string;
  w: number;
  big: { icon: string; label: [string, string?]; w: number };
  lead?: number;
  gap?: number;
  small?: SmallItem[];
  extra?: { icon: string; label: [string, string?]; w: number };
};

const GROUPS: GroupDef[] = [
  {
    name: "Reporting",
    w: 160,
    big: { icon: "chart", label: ["Report", "Manager"], w: 50 },
    lead: 6,
    small: [{ icon: "pages", label: "Label Printing" }],
  },
  {
    name: "Marketing",
    w: 180,
    big: { icon: "binoculars", label: ["Search For", "Campaign"], w: 62 },
    lead: 6,
    small: [
      { icon: "client", label: "Client Mailshots" },
      { icon: "contact", label: "Contact Groups" },
    ],
  },
  {
    name: "Digital Dictation",
    w: 184,
    big: { icon: "swirl", label: ["Dictate", "Now!"], w: 44 },
    lead: 5,
    gap: 8,
    small: [{ icon: "pageArrow", label: "Transcribe Dictation" }],
  },
  {
    name: "Misc",
    w: 256,
    big: { icon: "archive", label: ["Archiving"], w: 54 },
    lead: 6,
    small: [
      { icon: "enquiry", label: "Accounts Enquiry" },
      { icon: "audit", label: "Audit Viewer" },
      { icon: "conflict", label: "Static Conflict Check" },
    ],
    extra: { icon: "jar", label: ["Run Cash", "Collection"], w: 64 },
  },
  {
    name: "Import",
    w: 91,
    big: { icon: "scanner", label: ["Document", "Scanning"], w: 60 },
    lead: 4,
    small: [
      { icon: "list", aria: "Scan list" },
      { icon: "foldout", aria: "Scan folder" },
      { icon: "pageArrow", aria: "Import page" },
    ],
  },
  { name: "Dashboard", w: 81, big: { icon: "house", label: ["My Home", "Page"], w: 70 } },
  { name: "User Details", w: 88, big: { icon: "person", label: ["My", "Profile"], w: 77 } },
];

const BigButton = ({ b, off }: { b: GroupDef["big"]; off?: boolean }) => (
  <Big $w={b.w} disabled={off}>
    <Icon name={b.icon} />
    <span>
      {b.label[0]}
      {b.label[1] && <br />}
      {b.label[1]}
    </span>
  </Big>
);

/* ---------- practice management screen ---------- */

const Screen = styled.div`
  position: relative;
  display: flex;
  flex-direction: column;
  height: 864px;
  overflow: hidden;
  background: #fff;
`;

const Client = styled.main`
  display: flex;
  flex-direction: column;
  flex: 1;
  min-height: 0;
  margin: 1px 2px 0;
  border-top: 1px solid #7b7758;
`;

const HomeLine = styled.div`
  display: flex;
  align-items: center;
  justify-content: flex-end;
  gap: 16px;
  height: 29px;
  margin-right: 8px;
  padding-bottom: 8px;
  border-bottom: 1px solid #9a8a8a;
  a {
    color: #1208a8;
  }
`;

const RefreshRow = styled.div`
  display: flex;
  justify-content: flex-end;
  height: 38px;
  padding: 7px 13px 0;
`;

const RefreshButton = styled.button`
  display: grid;
  place-items: center;
  width: 24px;
  height: 24px;
  border: 2px solid #5b8fc9;
  border-radius: 3px;
  background: #eef5ff;
`;

const Panes = styled.div`
  display: flex;
  flex: 1;
  min-height: 0;
  padding-top: 20px;
  background: linear-gradient(#b5c7df 20px, #7a7a7a 20px);
  gap: 3px;
`;

const Pane = styled.section<{ $grow?: boolean }>`
  ${(p) => (p.$grow ? "flex: 1;" : "width: 231px;")}
  border: 4px solid #b9c8de;
  outline: 1px solid #2b4368;
  outline-offset: -1px;
  border-bottom-width: 5px;
  background: #fff;
`;

const PaneHead = styled.div`
  height: 30px;
  border-radius: 0 8px 0 0;
  background: linear-gradient(90deg, #a9c8fb, #7ea5f4 75%, #6f9bf3);
`;

const PaneBand = styled.div`
  height: 26px;
  background: #bbd9fc;
`;

const Sections = styled.div`
  display: flex;
  flex-direction: column;
  gap: 15px;
  padding: 16px 16px 0;
`;

const SectionBar = styled.button<{ $apart?: boolean }>`
  display: flex;
  align-items: center;
  justify-content: flex-end;
  height: 22px;
  margin-top: ${(p) => (p.$apart ? 27 : 0)}px;
  padding-right: 8px;
  border: 1px solid #7398cc;
  background: linear-gradient(#e4effd, #b9d8fd 40%, #add2fe);
`;

const AppStatus = styled.footer`
  display: flex;
  align-items: center;
  justify-content: space-between;
  flex: none;
  height: 23px;
  margin-top: 1px;
  padding: 0 9px 0 3px;
  border-top: 1px solid #6f8fb8;
  border-bottom: 1px solid #6f8fb8;
  background: ${statusBlue};
  color: #1c2f80;
`;

/* floating windows on the screen */

const Win = styled.article<{ $x: number; $y: number; $w: number; $h: number; $dim?: boolean }>`
  position: absolute;
  left: ${(p) => p.$x}px;
  top: ${(p) => p.$y}px;
  width: ${(p) => p.$w}px;
  height: ${(p) => p.$h}px;
  display: flex;
  flex-direction: column;
  border-radius: 6px 6px 0 0;
  background: ${(p) => (p.$dim ? "#7383dc" : "#0b3fe0")};
  box-shadow: inset 0 0 0 1px ${(p) => (p.$dim ? "#5c62c4" : "#0019b0")};
`;

const WinBody = styled.div`
  display: flex;
  flex-direction: column;
  flex: 1;
  min-height: 0;
  margin: 0 4px 4px;
  overflow: hidden;
  background: #ece9dc;
`;

const ToolStrip = styled.div`
  flex: none;
  height: 26px;
  padding: 5px 4px;
  background: linear-gradient(#cfe1fb, #b9d6fb);
  border-bottom: 1px solid #9fbde8;
  &::before {
    content: "";
    display: block;
    width: 2px;
    height: 16px;
    background: repeating-linear-gradient(#6f92cc 0 2px, transparent 2px 4px);
  }
`;

const Split = styled.div`
  display: flex;
  flex: 1;
  min-height: 0;
`;

const Side = styled.div`
  display: flex;
  flex-direction: column;
  width: 160px;
  background: #fff;
`;

const SideTitle = styled.div<{ $dark?: boolean }>`
  flex: none;
  height: 19px;
  padding-left: 11px;
  font-weight: 700;
  font-size: 12px;
  line-height: 19px;
  color: ${(p) => (p.$dark ? "#fff" : "#000")};
  background: ${(p) => (p.$dark ? "linear-gradient(#3f6fbf, #123f8c)" : "#fff")};
`;

const SideFields = styled.div`
  flex: 1;
  display: flex;
  flex-direction: column;
  min-height: 0;
  padding: 11px 0 0 7px;
  background: #fff;
`;

const FieldName = styled.span<{ $h?: number }>`
  flex: none;
  height: ${(p) => p.$h ?? 24}px;
`;

const SideRule = styled.div`
  flex: none;
  height: 6px;
  background: #23509c;
`;

const SideItem = styled.button<{ $on?: boolean; $tall?: boolean; $in?: number }>`
  flex: none;
  height: ${(p) => (p.$tall ? 32 : 26)}px;
  padding-left: ${(p) => p.$in ?? 11}px;
  border-top: 1px solid #14418c;
  font-weight: 700;
  font-size: 12px;
  text-align: left;
  background: ${(p) => (p.$on ? "linear-gradient(#fbd77c, #f0a11c)" : "linear-gradient(#c5dcf9, #84aeeb)")};
`;

const WinStatus = styled.footer`
  display: flex;
  align-items: center;
  flex: none;
  height: 22px;
  padding: 0 4px 0 1px;
  border-top: 1px solid #6f8fb8;
  background: ${statusBlue};
  color: #1c2f80;
  white-space: nowrap;
  span:first-child {
    flex: 1;
  }
`;

const GripRoot = styled.svg`
  margin-left: 10px;
`;

const Grip = ({ tone = "#5a78b8" }: { tone?: string }) => (
  <GripRoot width="12" height="12" viewBox="0 0 12 12" aria-hidden="true">
    <path d="M9 1h2v2H9zM9 5h2v2H9zM5 5h2v2H5zM9 9h2v2H9zM5 9h2v2H5zM1 9h2v2H1z" fill={tone} />
  </GripRoot>
);

const SetupMain = styled.div`
  display: flex;
  flex-direction: column;
  flex: 1;
  &::before {
    content: "";
    height: 20px;
    background: #4b3b8c;
  }
`;

const SetupPanel = styled.div`
  display: flex;
  flex-direction: column;
  flex: 1;
  margin: 22px 3px 2px 6px;
  border: 1px solid #9a9a94;
  background: #fff;
`;

const SetupRow = styled.div`
  height: 23px;
  border-bottom: 1px solid #9a9a94;
`;

const SetupFoot = styled.div`
  display: flex;
  justify-content: flex-end;
  margin-top: auto;
  padding: 8px 10px 11px;
  background: #f7ede4;
`;

const PrintButton = styled.button`
  width: 76px;
  height: 21px;
  border: 1px solid #123c60;
  border-radius: 3px;
  background: linear-gradient(#fff, #f0efe6);
`;

/* report viewer */

const Viewer = styled(WinBody)`
  border: 1px solid #000;
`;

const ViewerBar = styled.div`
  display: flex;
  align-items: center;
  flex: none;
  height: 28px;
  border-bottom: 1px solid #5f79c0;
  background: linear-gradient(#e9f2ff, #c7dafb 45%, #9ab8f3 90%, #84a2e6);
`;

const ViewerButton = styled.button`
  display: grid;
  place-items: center;
  flex: none;
  width: 28px;
  height: 22px;
`;

const ViewerSep = styled.span`
  width: 2px;
  height: 20px;
  margin: 0 1px 0 2px;
  border-left: 1px solid #7189c8;
  border-right: 1px solid #eef4ff;
`;

const PageBox = styled.input`
  width: 100px;
  height: 21px;
  margin: 0 4px;
  padding: 0 3px;
  border: 1px solid #a8b4c8;
  background: #ece9d8;
  color: #a8a495;
`;

const PageCount = styled.span`
  width: 13px;
`;

const ViewerTabs = styled.div`
  flex: none;
  height: 25px;
  padding: 0 3px;
`;

const ViewerTab = styled.button`
  width: 74px;
  height: 23px;
  padding-left: 4px;
  border-left: 2px solid #8c8a80;
  border-top: 1px solid #8c8a80;
  border-right: 1px solid #b4b0a2;
  background: #f6f4ee;
  text-align: left;
`;

const Paper = styled.div`
  display: flex;
  flex: 1;
  min-height: 0;
  margin: 0 4px 4px;
  overflow: hidden;
  border: 1px solid #000;
  background: #aaa8a8;
`;

const Sheet = styled.div`
  display: flex;
  flex: 1;
  min-width: 0;
  margin: 10px 15px 0 13px;
  border: 1px solid #000;
  border-bottom: 0;
  background: #fff;
  box-shadow: 4px 6px #000;
`;

const Labels = styled.div<{ $lead: number }>`
  display: flex;
  flex: 1;
  min-width: 0;
  padding: 38px 0 0 ${(p) => p.$lead}px;
`;

const LabelRoot = styled.div`
  display: grid;
  grid-template-columns: 227px 160px;
  flex: none;
  align-items: start;
  white-space: nowrap;
`;

const LabelSide = styled.div<{ $drop?: boolean }>`
  display: flex;
  flex-direction: column;
  padding-top: ${(p) => (p.$drop ? 17 : 0)}px;
`;

const LabelLine = styled.div<{ $gap?: number; $in?: number }>`
  margin-top: ${(p) => p.$gap ?? 0}px;
  padding-left: ${(p) => p.$in ?? 0}px;
`;

const Pair = styled.div<{ $gap: number; $w: number; $right?: boolean }>`
  display: grid;
  grid-template-columns: ${(p) => p.$w}px auto;
  column-gap: 2px;
  margin-top: ${(p) => p.$gap}px;
  b {
    text-align: ${(p) => (p.$right ? "right" : "left")};
  }
`;

const AddressLabel = () => (
  <LabelRoot>
    <LabelSide>
      <LabelLine>
        <b>Mr Liam Atkinson</b>
      </LabelLine>
      <LabelLine>35 Britain Drive</LabelLine>
      <LabelLine>Grantham</LabelLine>
      <LabelLine>Lincolnshire, NG31 5IP</LabelLine>
      <LabelLine $gap={38}>
        <b>Work type:</b> 01100 Domestic Convey - Prv
      </LabelLine>
      <LabelLine $gap={3}>Sale of Flat 5 Eldron Street</LabelLine>
      <LabelLine $gap={3}>
        <b>Opened:</b> 01/10/2008 <b>Court:</b> No Court
      </LabelLine>
    </LabelSide>
    <LabelSide $drop>
      <LabelLine $in={16}>
        <b>A00001-0001</b>
      </LabelLine>
      <Pair $gap={4} $w={37}>
        <b>Tel:</b>
        <span>01476 407983</span>
      </Pair>
      <Pair $gap={6} $w={37}>
        <b>Fax:</b>
      </Pair>
      <Pair $gap={6} $w={37}>
        <b>Work:</b>
      </Pair>
      <Pair $gap={21} $w={62} $right>
        <b>Fee:</b>
        <span>SJ</span>
      </Pair>
      <Pair $gap={3} $w={62} $right>
        <b>S'visor:</b>
        <span>SJ</span>
      </Pair>
    </LabelSide>
  </LabelRoot>
);

const Tip = styled.div`
  position: absolute;
  left: 888px;
  top: 244px;
  width: 32px;
  height: 17px;
  border: 1px solid #000;
  background: #ffffe1;
  line-height: 15px;
  text-align: center;
`;

const FIELDS: [string, number][] = [
  ["De", 24],
  ["Ke", 24],
  ["De", 23],
  ["Br", 24],
  ["Fe", 24],
  ["W", 30],
  ["Op", 16],
  ["Fr", 24],
  ["To", 32],
  ["Cl", 19],
  ["Fr", 24],
  ["To", 24],
];

const MatterWindow = () => (
  <Win $x={2} $y={146} $w={743} $h={560} $dim>
    <TitleBar $dim $inner>
      <TitleText>Matter Search</TitleText>
      <CaptionButtons dim />
    </TitleBar>
    <WinBody>
      <ToolStrip />
      <SideTitle>S</SideTitle>
      <SideTitle $dark>S</SideTitle>
      <SideFields>
        {FIELDS.map(([t, h], i) => (
          <FieldName key={i} $h={h}>
            {t}
          </FieldName>
        ))}
      </SideFields>
      <Track $across>
        <ScrollButton aria-label="Scroll left">
          <Icon name="chevronLeft" />
        </ScrollButton>
      </Track>
      <SideRule />
      <SideItem $on>S</SideItem>
      <SideItem>S</SideItem>
      <SideItem $in={5}>Se</SideItem>
      <SideItem $tall aria-label="More panels" />
      <WinStatus>
        <span>Matter Search</span>
      </WinStatus>
    </WinBody>
  </Win>
);

const SetupWindow = () => (
  <Win $x={25} $y={175} $w={951} $h={472} $dim>
    <TitleBar $dim $inner>
      <TitleText>Label Printing</TitleText>
      <CaptionButtons dim />
    </TitleBar>
    <WinBody>
      <ToolStrip />
      <Split>
        <Side>
          <SideTitle>L</SideTitle>
          <SideTitle $dark>P</SideTitle>
          <SideFields />
          <SideRule />
          <SideItem $on>P</SideItem>
          <SideItem>P</SideItem>
          <SideItem>P</SideItem>
          <SideItem>P</SideItem>
          <SideItem $tall aria-label="More panels" />
        </Side>
        <SetupMain>
          <SetupPanel>
            <SetupRow />
            <SetupFoot>
              <PrintButton>Print</PrintButton>
            </SetupFoot>
          </SetupPanel>
        </SetupMain>
      </Split>
      <WinStatus>
        <span>Label Printing</span>
        <span>IRIS Law Business</span>
        <Grip />
      </WinStatus>
    </WinBody>
  </Win>
);

const ReportWindow = ({ count, lead }: { count: number; lead: number }) => (
  <Win $x={46} $y={204} $w={860} $h={500}>
    <TitleBar $inner>
      <TitleText>Label Printing</TitleText>
      <CaptionButtons />
    </TitleBar>
    <Viewer>
      <ViewerBar>
        <ViewerButton aria-label="Export">
          <Icon name="exportFile" />
        </ViewerButton>
        <ViewerButton aria-label="Print report">
          <Icon name="printer" />
        </ViewerButton>
        <ViewerSep />
        <ViewerButton aria-label="Parameters">
          <Icon name="panel" />
        </ViewerButton>
        <ViewerButton aria-label="Group tree">
          <Icon name="tree" />
        </ViewerButton>
        <ViewerSep />
        {["first", "prev", "next", "last"].map((n) => (
          <ViewerButton key={n} aria-label={`${n} page`}>
            <Icon name={n} size={16} />
          </ViewerButton>
        ))}
        <ViewerSep />
        <PageBox aria-label="Page" defaultValue="1" disabled />
        <PageCount>/1</PageCount>
        <ViewerButton aria-label="Find">
          <Icon name="find" />
        </ViewerButton>
        <ViewerButton aria-label="Zoom">
          <Icon name="findPlus" />
        </ViewerButton>
        <Icon name="caret" size={7} />
      </ViewerBar>
      <ViewerTabs>
        <ViewerTab>Main Report</ViewerTab>
      </ViewerTabs>
      <Paper>
        <Sheet>
          <Labels $lead={lead}>
            {Array.from({ length: count }, (_, i) => (
              <AddressLabel key={i} />
            ))}
          </Labels>
        </Sheet>
        <Track>
          <ScrollButton aria-label="Scroll up">
            <Icon name="chevronUp" />
          </ScrollButton>
          <Thumb $grow={116} />
          <Gap $grow={234} />
          <ScrollButton aria-label="Scroll down">
            <Icon name="chevronDown" />
          </ScrollButton>
        </Track>
      </Paper>
      <WinStatus>
        <span>Label Printing</span>
        <span>IRIS Law Business</span>
        <Grip />
      </WinStatus>
    </Viewer>
  </Win>
);

const PracticeScreen = ({ count, lead, tip }: { count: number; lead: number; tip?: boolean }) => (
  <Screen>
    <Orb aria-label="Application menu">
      <Icon name="orb" size={36} />
    </Orb>
    <RibbonTitle>
      <QuickBar>
        <Icon name="recycle" />
        <Icon name="caret" size={6} />
      </QuickBar>
      <QuickMore>
        <Icon name="overflow" />
      </QuickMore>
      <RibbonName>Practice Management System - IRIS Law Business : Iris Legal</RibbonName>
      <RibbonCaptions>
        <button aria-label="Minimize application">
          <Icon name="minimize" size={10} />
        </button>
        <button aria-label="Restore application">
          <Icon name="restore" size={10} />
        </button>
        <button aria-label="Close application">
          <Icon name="cross" size={9} />
        </button>
      </RibbonCaptions>
    </RibbonTitle>
    <TabStrip>
      <Tab>Home</Tab>
      <Tab $on>Tools</Tab>
      <Tab>View</Tab>
      <Tab>Help</Tab>
      <Areas>
        {["Accounts", "Time Recording", "Diary", "Doc Management", "Utilities"].map((a) => (
          <button key={a}>{a}</button>
        ))}
      </Areas>
    </TabStrip>
    <Ribbon>
      {GROUPS.map((g) => (
        <GroupBox key={g.name} $w={g.w}>
          <GroupBody>
            <BigButton b={g.big} />
            {g.small && (
              <SmallCol $lead={g.lead ?? 0}>
                {g.small.map((s, i) => (
                  <Small key={i} $gap={g.gap} aria-label={s.aria}>
                    <Icon name={s.icon} />
                    {s.label}
                  </Small>
                ))}
              </SmallCol>
            )}
            {g.extra && <BigButton b={g.extra} off />}
          </GroupBody>
          <GroupName>{g.name}</GroupName>
        </GroupBox>
      ))}
    </Ribbon>
    <Client>
      <HomeLine>
        <a href="#customise">Customise Home Page</a>
        <Icon name="caret" />
        <Icon name="cross" size={9} />
      </HomeLine>
      <RefreshRow>
        <RefreshButton aria-label="Refresh">
          <Icon name="refresh" />
        </RefreshButton>
      </RefreshRow>
      <Panes>
        <Pane />
        <Pane $grow>
          <PaneHead />
          <PaneBand />
          <Sections>
            {[0, 1, 2, 3].map((i) => (
              <SectionBar key={i} $apart={i === 2} aria-label={`Collapse section ${i + 1}`}>
                <Icon name="expander" />
              </SectionBar>
            ))}
          </Sections>
        </Pane>
      </Panes>
    </Client>
    <AppStatus>
      <span>IRIS Law Business : v1.16</span>
      <span>IRIS Law Business</span>
    </AppStatus>
    <TaskBarRoot>
      <StartButton />
      <Tasks $lead>
        <Task $wide>
          <Icon name="folder" />
          <span>PMS</span>
        </Task>
        <Task $wide $on>
          <Icon name="orb" size={18} />
          <span>Practice Management...</span>
        </Task>
      </Tasks>
      <Lang>EN</Lang>
      <Tray>
        <TrayExpand />
        <Icon name="shield" />
        <Clock>15:03</Clock>
      </Tray>
    </TaskBarRoot>
    <MatterWindow />
    <SetupWindow />
    <ReportWindow count={count} lead={lead} />
    {tip && <Tip role="tooltip">Close</Tip>}
  </Screen>
);

/* ---------- Paint ---------- */

const Monitors = styled.div`
  display: grid;
  grid-template-columns: 1281fr 1279fr;
  height: 100vh;
`;

const AppWindow = styled.section`
  display: flex;
  flex-direction: column;
  min-width: 0;
  min-height: 0;
  background: #ece9d8;
`;

const MenuBar = styled.nav`
  display: flex;
  flex: none;
  height: 20px;
  padding-left: 5px;
  gap: 12px;
`;

const Work = styled.div`
  display: flex;
  flex: 1;
  min-height: 0;
  border-top: 1px solid #fff;
`;

const ToolBox = styled.div`
  display: grid;
  grid-template-columns: 24px 24px;
  grid-auto-rows: 25px;
  align-content: start;
  gap: 0 1px;
  width: 57px;
  padding: 3px 3px 0;
  border-right: 1px solid #aca899;
`;

const Tool = styled.button<{ $on?: boolean }>`
  display: grid;
  place-items: center;
  font: 700 17px/20px "Liberation Serif", serif;
  ${(p) =>
    p.$on &&
    css`
      background: #fff;
      border: 1px solid #8a9ab4;
      border-radius: 3px;
    `}
`;

const ToolOptions = styled.div`
  grid-column: 1 / -1;
  width: 41px;
  margin: 5px 0 0 5px;
  border: 1px solid #c0bca8;
`;

const ToolOption = styled.button<{ $on?: boolean }>`
  display: grid;
  place-items: center;
  width: 39px;
  height: 32px;
  background: ${(p) => (p.$on ? "#316ac5" : "#ece9d8")};
`;

const CanvasArea = styled.div`
  display: grid;
  grid-template-columns: 1fr 17px;
  grid-template-rows: minmax(0, 1fr) 17px;
  flex: 1;
  min-width: 0;
  margin-right: 3px;
  border-top: 1px solid #716f64;
  border-left: 1px solid #716f64;
`;

const Viewport = styled.div`
  overflow: hidden;
  padding: 6px 27px 0 24px;
  background: #808080;
`;

const ColorBox = styled.div`
  display: flex;
  flex: none;
  height: 49px;
  padding-top: 7px;
  border-top: 1px solid #fff;
  border-bottom: 2px solid #aca899;
`;

const CurrentColors = styled.div`
  display: grid;
  grid-template-columns: repeat(4, 7px);
  grid-template-rows: repeat(4, 7px);
  width: 30px;
  height: 32px;
  margin-right: 1px;
  border: 1px solid #716f64;
  background: #f6f4ec;
`;

const Current = styled.span<{ $c: string; $front?: boolean }>`
  grid-area: ${(p) => (p.$front ? "1 / 1 / 4 / 4" : "2 / 2 / 5 / 5")};
  margin: ${(p) => (p.$front ? "4px 4px 4px 5px" : "5px 2px 0 4px")};
  z-index: ${(p) => (p.$front ? 1 : 0)};
  background: ${(p) => p.$c};
  outline: 1px solid #d0ccbc;
`;

const Swatches = styled.div`
  display: grid;
  grid-template-columns: repeat(14, 14px);
  grid-auto-rows: 14px;
  gap: 2px;
  height: 32px;
  padding: 1px 0 0;
`;

const Swatch = styled.button<{ $c: string }>`
  background: ${(p) => p.$c};
  border: 1px solid #000;
  border-right-color: #fff;
  border-bottom-color: #fff;
`;

const PaintStatus = styled.footer`
  display: flex;
  align-items: center;
  flex: none;
  height: 24px;
  padding: 0 2px;
  font-size: 12px;
  span:first-child {
    flex: 1;
  }
`;

const StatusCell = styled.span<{ $w: number }>`
  display: flex;
  align-items: center;
  gap: 6px;
  width: ${(p) => p.$w}px;
  height: 18px;
  padding-left: 5px;
  border-left: 1px solid #aca899;
  box-shadow: inset 1px 0 #fff;
`;

const TOOLS = [
  "freeSelect", "rectSelect", "eraser", "fill", "dropper", "magnifier", "pencil", "brush",
  "spray", "text", "line", "curve", "rect", "poly", "ellipse", "roundRect",
];

const PALETTE = [
  "#000000", "#808080", "#800000", "#808000", "#008000", "#008080", "#000080",
  "#800080", "#808040", "#004040", "#0080ff", "#004080", "#8000ff", "#804000",
  "#ffffff", "#c0c0c0", "#ff0000", "#ffff00", "#00ff00", "#00ffff", "#0000ff",
  "#ff00ff", "#ffff80", "#00ff80", "#80ffff", "#8080ff", "#ff0080", "#ff8040",
];

const TASKS: { icon: string; label: string; on?: boolean; more?: boolean }[] = [
  { icon: "outlook", label: "Inbox - ..." },
  { icon: "ie", label: "2 Inte...", more: true },
  { icon: "chrome", label: "[#LCSIL..." },
  { icon: "folderFind", label: "C:\\Docu..." },
  { icon: "cone", label: "tera  ph..." },
  { icon: "word", label: "2 Micr...", more: true },
  { icon: "brushes", label: "2 Paint", more: true, on: true },
  { icon: "excel", label: "Microsof..." },
  { icon: "talk", label: "George ..." },
];

const PaintWindow = () => (
  <AppWindow>
    <TitleBar>
      <Icon name="brushes" />
      <TitleText>untitled - Paint</TitleText>
      <CaptionButtons restored />
    </TitleBar>
    <MenuBar>
      {["File", "Edit", "View", "Image", "Colors", "Help"].map((m) => (
        <button key={m}>{m}</button>
      ))}
    </MenuBar>
    <Work>
      <ToolBox>
        {TOOLS.map((t) => (
          <Tool key={t} $on={t === "rectSelect"} aria-label={t === "text" ? undefined : t}>
            {t === "text" ? "A" : <Icon name={t} />}
          </Tool>
        ))}
        <ToolOptions>
          <ToolOption $on aria-label="Opaque background">
            <Icon name="tilesOpaque" size={36} />
          </ToolOption>
          <ToolOption aria-label="Transparent background">
            <Icon name="tilesClear" size={36} />
          </ToolOption>
        </ToolOptions>
      </ToolBox>
      <CanvasArea>
        <Viewport>
          <PracticeScreen count={1} lead={25} tip />
        </Viewport>
        <Track>
          <ScrollButton aria-label="Scroll canvas up">
            <Icon name="chevronUp" />
          </ScrollButton>
          <Gap $grow={62} />
          <Thumb $grow={680} />
          <Gap $grow={79} />
          <ScrollButton aria-label="Scroll canvas down">
            <Icon name="chevronDown" />
          </ScrollButton>
        </Track>
        <Track $across>
          <ScrollButton aria-label="Scroll canvas left">
            <Icon name="chevronLeft" />
          </ScrollButton>
          <Gap $grow={604} />
          <Thumb $grow={546} $across />
          <Gap $grow={19} />
          <ScrollButton aria-label="Scroll canvas right">
            <Icon name="chevronRight" />
          </ScrollButton>
        </Track>
      </CanvasArea>
    </Work>
    <ColorBox>
      <CurrentColors>
        <Current $c="#000" $front />
        <Current $c="#fff" />
      </CurrentColors>
      <Swatches>
        {PALETTE.map((c) => (
          <Swatch key={c} $c={c} aria-label={`Colour ${c}`} />
        ))}
      </Swatches>
    </ColorBox>
    <PaintStatus>
      <span>For Help, click Help Topics on the Help Menu.</span>
      <StatusCell $w={119} />
      <StatusCell $w={119} />
    </PaintStatus>
    <TaskBarRoot>
      <StartButton />
      <QuickLaunch>
        <Icon name="desktop" />
        <Icon name="chrome" />
        <Icon name="ie" />
        <span>»</span>
      </QuickLaunch>
      <Tasks>
        {TASKS.map((t) => (
          <Task key={t.label} $on={t.on}>
            <Icon name={t.icon} />
            <span>{t.label}</span>
            {t.more && <Icon name="caret" size={7} />}
          </Task>
        ))}
      </Tasks>
      <Tray>
        <TrayExpand />
        {["orbGreen", "cone", "spinner", "tick", "lens", "shield", "outlook", "speaker"].map((n) => (
          <Icon key={n} name={n} />
        ))}
        <Clock>15:04</Clock>
      </Tray>
    </TaskBarRoot>
  </AppWindow>
);

/* ---------- Internet Explorer ---------- */

const AddressRow = styled.div`
  display: flex;
  flex: none;
  align-items: center;
  height: 22px;
  padding-right: 6px;
  gap: 3px;
  border-bottom: 1px solid #9a9888;
`;

const Address = styled.div`
  display: flex;
  align-items: center;
  flex: 1;
  gap: 5px;
  height: 21px;
  padding-left: 5px;
  border: 1px solid #8fb0c8;
  color: #9d9a8c;
  b {
    font-weight: 400;
    color: #000;
  }
`;

const CompatButton = styled.button`
  display: grid;
  place-items: center;
  width: 22px;
  height: 21px;
  border: 1px solid #7d8a94;
  border-radius: 3px;
  background: #d5dbe0;
`;

const Page = styled.div`
  flex: 1;
  min-height: 0;
  overflow: hidden;
  margin: 2px 3px 0 1px;
  padding: 29px 60px 0 61px;
  border: 1px solid #000;
  border-bottom: 0;
  background: #808080;
`;

const Commands = styled.div`
  display: flex;
  gap: 6px;
  flex: none;
  height: 25px;
  margin: 0 3px 0 1px;
  padding: 3px 1px 2px;
  background: #000;
`;

const Command = styled.button<{ $w: number }>`
  width: ${(p) => p.$w}px;
  height: 20px;
  border: 1px solid #55687c;
  border-radius: 3px;
  background: linear-gradient(#fff, #f1f0e8);
  font: 13px/16px "Liberation Sans", sans-serif;
`;

const BrowserStatus = styled.footer`
  display: flex;
  align-items: center;
  justify-content: flex-end;
  flex: none;
  height: 25px;
  border-top: 1px solid #aca899;
  padding-right: 1px;
  font-size: 12px;
`;

const BrowserWindow = () => (
  <AppWindow>
    <TitleBar $dim>
      <Icon name="ie" />
      <TitleText>Remote Control Session - Windows Internet Explorer</TitleText>
      <CaptionButtons dim restored />
    </TitleBar>
    <AddressRow>
      <Address>
        <Icon name="iePage" size={14} />
        <span>
          http://<b>172.26.49.136</b>:3333/ConsoleView.aspx?vmid=ba438357-886a-4e4c-a596-41da9faffa6e
        </span>
      </Address>
      <CompatButton aria-label="Compatibility view">
        <Icon name="compat" size={14} />
      </CompatButton>
    </AddressRow>
    <Page>
      <PracticeScreen count={2} lead={28} />
    </Page>
    <Commands>
      <Command $w={168}>Send Ctrl+Alt+Del</Command>
      <Command $w={103}>Reconnect</Command>
    </Commands>
    <BrowserStatus>
      {[0, 1, 2, 3, 4, 5].map((i) => (
        <StatusCell key={i} $w={24} />
      ))}
      <StatusCell $w={154}>
        <Icon name="globe" />
        Internet
      </StatusCell>
      <StatusCell $w={44}>
        <Icon name="lock" />
        <Icon name="caret" size={7} />
      </StatusCell>
      <StatusCell $w={77}>
        <Icon name="zoomIn" size={14} />
        100%
        <Icon name="caret" size={7} />
      </StatusCell>
      <Grip tone="#b8b4a2" />
    </BrowserStatus>
  </AppWindow>
);

const App = () => (
  <>
    <Global />
    <Monitors>
      <PaintWindow />
      <BrowserWindow />
    </Monitors>
  </>
);

export default App;
